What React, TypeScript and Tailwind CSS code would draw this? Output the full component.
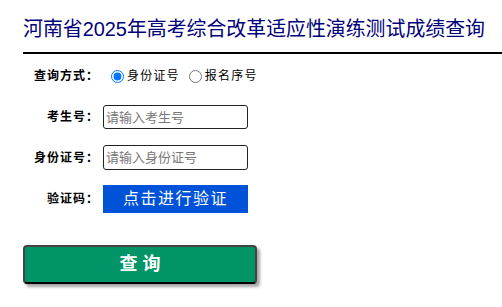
const cjk = "font-['Liberation_Sans','Noto_Sans_CJK_SC',sans-serif]";

function FormRow({ label, children, className }: { label: string; children: React.ReactNode; className: string }) {
  return (
    <div className={`flex items-center ${className}`}>
      <div className="w-[76px] shrink-0 text-right text-[12px] font-bold tracking-[1px] text-black">{label}</div>
      <div className="ml-[4px] flex items-center">{children}</div>
    </div>
  );
}

function App() {
  return (
    <div className={`w-[502px] h-[307px] overflow-hidden bg-white ${cjk}`}>
      <div className="ml-[23px] pt-[17px] pb-[11px] border-b-2 border-black">
        <h1 className="text-[19.9px] leading-[24px] whitespace-nowrap text-[#00007a]">
          河南省2025年高考综合改革适应性演练测试成绩查询
        </h1>
      </div>

      <div className="ml-[23px]">
        <FormRow label="查询方式：" className="mt-[10px] h-[24px]">
          <label className="ml-[8px] flex items-center text-[12px] tracking-[1.2px] text-black">
            <input type="radio" name="way" defaultChecked className="m-0 h-[13px] w-[13px]" />
            <span className="ml-[3px]">身份证号</span>
          </label>
          <label className="ml-[9px] flex items-center text-[12px] tracking-[1.2px] text-black">
            <input type="radio" name="way" className="m-0 h-[13px] w-[13px]" />
            <span className="ml-[3px]">报名序号</span>
          </label>
        </FormRow>

        <FormRow label="考生号：" className="mt-[17px] h-[24px]">
          <input
            placeholder="请输入考生号"
            className="h-[24px] w-[145px] rounded-[3px] border border-[#222] px-[2px] text-[13px] outline-none placeholder:text-[#777]"
          />
        </FormRow>

        <FormRow label="身份证号：" className="mt-[16px] h-[25px]">
          <input
            placeholder="请输入身份证号"
            className="h-[25px] w-[145px] rounded-[3px] border border-[#222] px-[2px] text-[13px] outline-none placeholder:text-[#777]"
          />
        </FormRow>

        <FormRow label="验证码：" className="mt-[15px] h-[28px]">
          <button className="flex h-[28px] w-[145px] items-center justify-center bg-[#0052d9] text-[16px] tracking-[1.5px] text-white">
            点击进行验证
          </button>
        </FormRow>

        <button className="mt-[32px] flex h-[39px] w-[234px] items-center justify-center rounded-[4px] border-2 border-[#444] border-b-black bg-[#009466] text-[18px] font-bold text-white shadow-[3px_3px_3px_rgba(0,0,0,0.35)]">
          查&nbsp;询
        </button>
      </div>
    </div>
  );
}

export default App;
